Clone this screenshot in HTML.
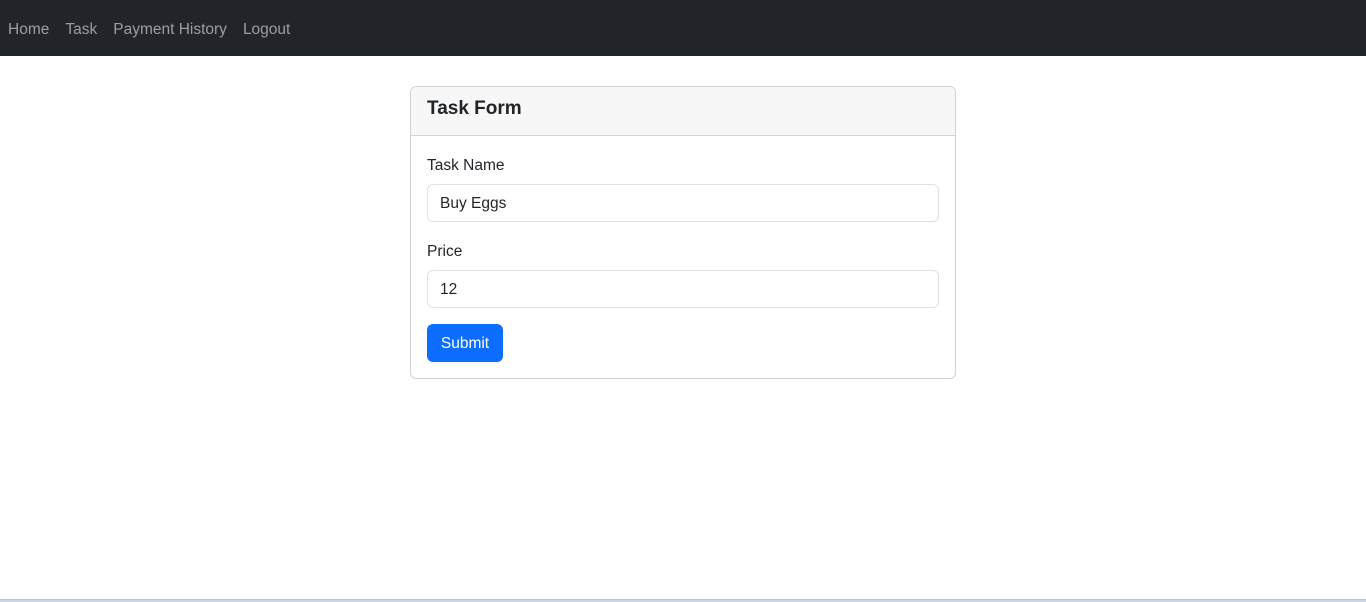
<!DOCTYPE html>
<html><head><style>
*{box-sizing:border-box;margin:0;padding:0}
body{width:1366px;height:602px;background:#fff;font-family:"Liberation Sans",sans-serif;font-size:15.5px;color:#212529;position:relative;overflow:hidden}
nav{height:56px;background:#212529;display:flex;align-items:center;padding-left:8px;padding-top:4px}
nav a{color:rgba(255,255,255,.55);text-decoration:none;margin-right:16px;font-size:15.5px}
.card{position:absolute;left:410px;top:86px;width:546px;height:293px;border:1px solid #d3d3d3;border-radius:6px;overflow:hidden}
.hd{height:49px;background:#f7f7f7;border-bottom:1px solid #d3d3d3;padding:11px 16px;font-size:19px;font-weight:bold;color:#212529}
label{position:absolute;left:16px;font-size:15.5px}
.in{position:absolute;left:16px;width:512px;height:38px;border:1px solid #dee2e6;border-radius:6px;padding:10px 12px 0;font-size:15.5px}
.btn{position:absolute;left:16px;top:237px;width:76px;height:38px;background:#0d6efd;color:#fff;border-radius:6px;text-align:center;line-height:40px;font-size:15.5px}
.bar{position:absolute;left:0;bottom:0;width:1366px;height:3px;background:#c8d6e8;border-top:1px solid #b3c3da}
</style></head><body>
<nav><a>Home</a><a>Task</a><a>Payment History</a><a>Logout</a></nav>
<div class="card">
<div class="hd">Task Form</div>
<label style="top:70px">Task Name</label>
<div class="in" style="top:97px">Buy Eggs</div>
<label style="top:156px">Price</label>
<div class="in" style="top:183px">12</div>
<div class="btn">Submit</div>
</div>
<div class="bar"></div>
</body></html>
